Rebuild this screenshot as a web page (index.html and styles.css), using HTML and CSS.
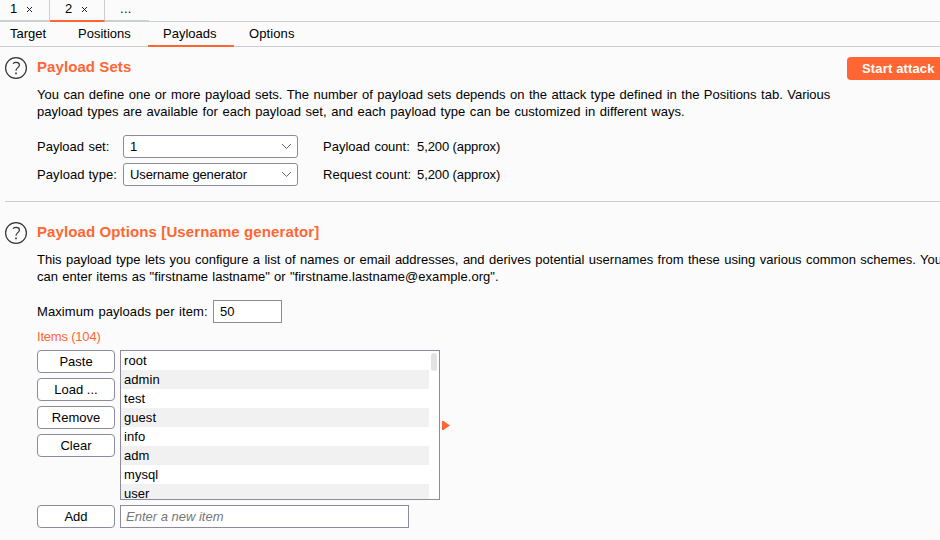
FILE: index.html
```html
<!DOCTYPE html>
<html lang="en">
<head>
<meta charset="utf-8">
<title>Payloads</title>
<link rel="stylesheet" href="styles.css">
</head>
<body>
<nav class="attacks">
  <div class="attack first"><span>1</span><svg class="close" viewBox="0 0 7 7"><path d="M1 1l5 5M6 1l-5 5"/></svg></div>
  <div class="attack active"><span>2</span><svg class="close" viewBox="0 0 7 7"><path d="M1 1l5 5M6 1l-5 5"/></svg></div>
  <div class="attack more"><span>...</span></div>
</nav>
<nav class="tabs">
  <div class="tab target"><span>Target</span></div>
  <div class="tab positions"><span>Positions</span></div>
  <div class="tab payloads active"><span>Payloads</span></div>
  <div class="tab options"><span>Options</span></div>
</nav>
<section class="sets">
  <svg class="help" viewBox="0 0 24 24"><circle cx="12" cy="12" r="10.4"/><path d="M8.9 7.6Q10.3 6.4 12.1 6.4Q15.4 6.4 15.4 9.1Q15.4 10.5 13.6 11.9Q12 13.1 12 14.7"/><path class="dot" d="M11.2 16.4h1.6v1.8h-1.6z"/></svg>
  <div class="content">
    <div class="head"><h2><span class="h-sets">Payload Sets</span></h2><button class="start"><span>Start attack</span></button></div>
    <p><span class="a1">You can define one or more payload sets. The number of payload sets depends on the attack type defined in the Positions tab. Various</span><br><span class="a2">payload types are available for each payload set, and each payload type can be customized in different ways.</span></p>
    <div class="fields">
      <label><span class="l-set">Payload set:</span></label>
      <div class="select"><span>1</span><svg viewBox="0 0 11 7"><path d="M1 1l4.5 4.5L10 1"/></svg></div>
      <label><span class="l-pc">Payload count:</span></label>
      <div><span class="approx">5,200 (approx)</span></div>
      <label><span class="l-type">Payload type:</span></label>
      <div class="select"><span class="user-gen">Username generator</span><svg viewBox="0 0 11 7"><path d="M1 1l4.5 4.5L10 1"/></svg></div>
      <label><span class="l-rc">Request count:</span></label>
      <div><span class="approx">5,200 (approx)</span></div>
    </div>
  </div>
</section>
<section class="opts">
  <svg class="help" viewBox="0 0 24 24"><circle cx="12" cy="12" r="10.4"/><path d="M8.9 7.6Q10.3 6.4 12.1 6.4Q15.4 6.4 15.4 9.1Q15.4 10.5 13.6 11.9Q12 13.1 12 14.7"/><path class="dot" d="M11.2 16.4h1.6v1.8h-1.6z"/></svg>
  <div class="content">
    <div class="head"><h2><span class="h-opts">Payload Options [Username generator]</span></h2></div>
    <p><span class="b1">This payload type lets you configure a list of names or email addresses, and derives potential usernames from these using various common schemes. You</span><br><span class="b2">can enter items as "firstname lastname" or "firstname.lastname@example.org".</span></p>
    <div class="max"><label><span class="l-max">Maximum payloads per item:</span></label><div class="input"><span>50</span></div></div>
    <div class="count"><span class="items-n">Items (104)</span></div>
    <div class="editor">
      <div class="buttons">
        <button><span>Paste</span></button>
        <button><span>Load ...</span></button>
        <button><span>Remove</span></button>
        <button><span>Clear</span></button>
      </div>
      <div class="list">
        <ul>
          <li><span>root</span></li><li><span>admin</span></li><li><span>test</span></li><li><span>guest</span></li>
          <li><span>info</span></li><li><span>adm</span></li><li><span>mysql</span></li><li><span>user</span></li>
        </ul>
        <div class="track"><div class="thumb"></div></div>
      </div>
      <svg class="arrow" viewBox="0 0 8 9"><path d="M0 0h1.5L8 4.5L1.5 9H0z"/></svg>
    </div>
    <div class="add"><button><span>Add</span></button><div class="input new"><span class="ph">Enter a new item</span></div></div>
  </div>
</section>
</body>
</html>
```
FILE: styles.css
```css
* { box-sizing: border-box; }
body { margin: 0; width: 940px; height: 540px; overflow: hidden; background: #fbfbfb; color: #000; font: 13px/17px "Liberation Sans", Arial, sans-serif; }
span { white-space: nowrap; }
.attacks { display: flex; height: 22px; border-bottom: 1px solid #c9d0ce; }
.attack { display: flex; height: 21px; border-bottom: 1px solid #c9d0ce; border-right: 1px solid #c9d0ce; padding-left: 15px; gap: 9px; width: 55px; }
.attack.first { width: 50px; padding-left: 10px; }
.attack.active { height: 22px; border-bottom: 2px solid #ff6633; }
.attack.more { width: 44px; border-right: 0; padding-left: 15px; letter-spacing: .3px; }
.close { width: 7px; height: 7px; margin-top: 6px; stroke: #222; stroke-width: 1; fill: none; }
.tabs { display: flex; height: 25px; border-bottom: 1px solid #c9cdcb; line-height: 24px; }
.tab { height: 25px; }
.target { width: 68px; padding-left: 10px; }
.positions { width: 80px; padding-left: 10px; }
.payloads { width: 86px; padding-left: 15px; }
.options { padding-left: 15px; letter-spacing: .1px; }
.tab.active { border-bottom: 2px solid #ff6633; }
section { display: flex; padding-left: 4px; }
.sets { height: 154px; }
.opts { height: 339px; margin-left: 5px; padding-left: 0; border-top: 1px solid #cccfce; }
.help { flex: none; width: 24px; height: 24px; margin-top: 9px; fill: none; stroke: #333; stroke-width: 1.2; }
.opts .help { margin: 19px 0 0 -1px; }
.help .dot { fill: #333; stroke: none; }
.content { flex: 1; min-width: 0; padding: 10px 0 0 9px; }
.opts .content { padding-top: 19px; }
.head { display: flex; justify-content: space-between; height: 23px; }
h2 { margin: 0; font-size: 15px; line-height: 22px; font-weight: bold; color: #ff6633; }
.sets h2 { line-height: 20px; }
button { display: flex; align-items: center; justify-content: center; width: 78px; height: 23px; padding: 0; border: 1px solid #8d8a9d; border-radius: 4px; background: #fff; color: #000; font: inherit; }
.start { width: 93px; padding-left: 15px; justify-content: flex-start; border: 0; border-radius: 4px 0 0 4px; background: #ff6633; color: #fff; font-weight: bold; letter-spacing: .15px; }
p { margin: 6px 0 0; }
.opts p { margin-top: 7px; }
.fields { display: grid; grid-template-columns: 86px 175px 119px 110px; grid-auto-rows: 23px; row-gap: 5px; margin-top: 15px; line-height: 23px; }
.fields > .select + label { margin-left: 25px; }
.select { display: flex; align-items: center; justify-content: space-between; padding: 0 5px 0 6px; border: 1px solid #8d8a9d; border-radius: 3px; background: #fff; }
.select svg { width: 11px; height: 7px; fill: none; stroke: #666; stroke-width: 1; }
.max { display: flex; height: 23px; margin-top: 15px; line-height: 23px; }
.max label { width: 176px; }
.input { width: 69px; height: 23px; padding-left: 6px; border: 1px solid #8d8a9d; background: #fff; line-height: 21px; }
.count { height: 27px; padding-top: 5px; color: #ff6633; }
.editor { display: flex; height: 150px; }
.buttons { display: flex; flex-direction: column; gap: 5px; margin-right: 5px; }
.list { display: flex; width: 320px; height: 150px; border: 1px solid #8d8a9d; background: #fff; overflow: hidden; }
ul { width: 308px; margin: 0; padding: 0; list-style: none; }
li { height: 19px; padding-left: 3px; line-height: 19px; letter-spacing: .05px; }
li:nth-child(even) { background: #f1f1f1; }
.track { flex: 1; padding: 2px 0 0 2px; }
.thumb { width: 6px; height: 18px; border-radius: 3px; background: #e3e3e3; }
.arrow { width: 8px; height: 9px; margin: 71px 0 0 2px; fill: #ff6633; }
.add { display: flex; gap: 5px; margin-top: 5px; }
.new { width: 289px; padding-left: 5px; }
.ph { color: #777; font-style: italic; }
.a1 { word-spacing: .85px; }
.a2 { word-spacing: .9px; letter-spacing: .03px; }
.b1 { word-spacing: .8px; }
.b2 { word-spacing: .5px; letter-spacing: .04px; }
.h-sets { letter-spacing: .08px; }
.h-opts { letter-spacing: .11px; }
.l-set, .l-pc { word-spacing: .8px; }
.l-type { letter-spacing: .1px; }
.l-rc { letter-spacing: .06px; }
.l-max { word-spacing: .8px; letter-spacing: .08px; }
.approx { letter-spacing: -.1px; }
.user-gen { letter-spacing: -.13px; }
.items-n { letter-spacing: -.2px; }
```
